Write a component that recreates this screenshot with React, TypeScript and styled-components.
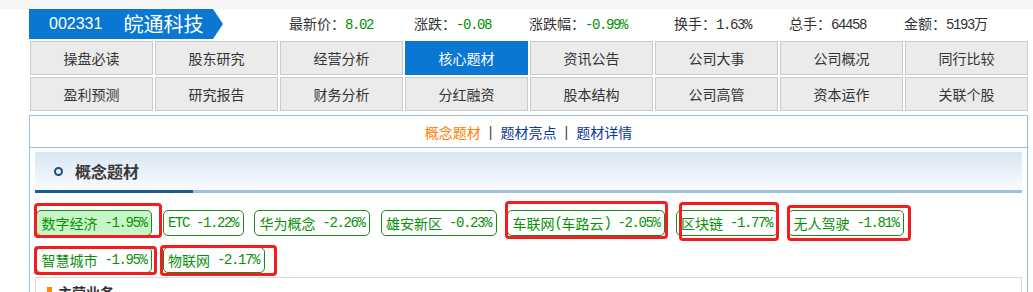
import React from 'react';
import styled, { createGlobalStyle } from 'styled-components';

const CJK = `"Noto Sans CJK SC", "Noto Sans", sans-serif`;
const MONO = `"Liberation Mono", "DejaVu Sans Mono", monospace`;

const GlobalStyle = createGlobalStyle`
  html, body {
    margin: 0;
    padding: 0;
    background: #fff;
  }
  body {
    font-family: ${CJK};
    color: #333;
  }
`;

interface Mark {
  t: number;
  r: number;
  b: number;
  l: number;
}

interface Concept {
  name: string;
  pct: string;
  selected?: boolean;
  mark?: Mark;
}

const stats = [
  { label: '最新价', value: '8.02', w: 125, down: true },
  { label: '涨跌', value: '-0.08', w: 115, down: true },
  { label: '涨跌幅', value: '-0.99%', w: 145, down: true },
  { label: '换手', value: '1.63%', w: 115 },
  { label: '总手', value: '64458', w: 115 },
  { label: '金额', value: '5193万', w: 0 },
];

const navRows = [
  ['操盘必读', '股东研究', '经营分析', '核心题材', '资讯公告', '公司大事', '公司概况', '同行比较'],
  ['盈利预测', '研究报告', '财务分析', '分红融资', '股本结构', '公司高管', '资本运作', '关联个股'],
];

const concepts: Concept[] = [
  { name: '数字经济', pct: '-1.95%', selected: true, mark: { t: -8, r: -11, b: -3, l: -3 } },
  { name: 'ETC', pct: '-1.22%' },
  { name: '华为概念', pct: '-2.26%' },
  { name: '雄安新区', pct: '-0.23%' },
  { name: '车联网(车路云)', pct: '-2.05%', mark: { t: -10, r: -4, b: -4, l: -3 } },
  { name: '区块链', pct: '-1.77%', mark: { t: -9, r: -2, b: -6, l: 2 } },
  { name: '无人驾驶', pct: '-1.81%', mark: { t: -6, r: -8, b: -6, l: -2 } },
  { name: '智慧城市', pct: '-1.95%', mark: { t: -2, r: -6, b: -3, l: -3 } },
  { name: '物联网', pct: '-2.17%', mark: { t: -3, r: -13, b: -4, l: -4 } },
];

// ascii runs get the narrow half-width look of the original page
function Mixed({ text }: { text: string }) {
  const parts = text.match(/[\x00-\x7f]+|[^\x00-\x7f]+/g) || [];
  return (
    <>
      {parts.map((p, i) =>
        /^[\x00-\x7f]/.test(p) ? <Half key={i}>{p}</Half> : <span key={i}>{p}</span>
      )}
    </>
  );
}

export default function App() {
  return (
    <>
      <GlobalStyle />
      <TopStrip />
      <Page>
        <Header>
          <CodeTag>
            <Code>002331</Code>
            <StockName>皖通科技</StockName>
          </CodeTag>
          <Stats>
            {stats.map((s) => (
              <Stat key={s.label} $w={s.w}>
                {s.label}：
                <StatValue $down={!!s.down}>
                  <Mixed text={s.value} />
                </StatValue>
              </Stat>
            ))}
          </Stats>
        </Header>

        <Nav>
          {navRows.flat().map((item) => (
            <NavCell key={item} $active={item === '核心题材'}>
              {item}
            </NavCell>
          ))}
        </Nav>

        <Panel>
          <SubTabs>
            <SubTab $active>概念题材</SubTab>
            <Sep>|</Sep>
            <SubTab>题材亮点</SubTab>
            <Sep>|</Sep>
            <SubTab>题材详情</SubTab>
          </SubTabs>

          <PanelBody>
            <SectionHead>
              <Ring />
              <SectionTitle>概念题材</SectionTitle>
            </SectionHead>

            <TagList>
              {concepts.map((c) => (
                <Tag key={c.name} $selected={!!c.selected} $mark={c.mark}>
                  <Mixed text={`${c.name} ${c.pct}`} />
                </Tag>
              ))}
            </TagList>

            <InfoBox>
              <Bullet />
              <InfoTitle>主营业务</InfoTitle>
            </InfoBox>
          </PanelBody>
        </Panel>
      </Page>
    </>
  );
}

const TopStrip = styled.div`
  height: 9px;
  background: #f6f6f6;
`;

const Page = styled.div`
  padding-left: 29px;
`;

const Half = styled.span`
  font-family: ${MONO};
  letter-spacing: -1.4px;
  white-space: pre;
`;

const Header = styled.div`
  display: flex;
  align-items: center;
  height: 30px;
`;

const CodeTag = styled.div`
  display: flex;
  align-items: center;
  box-sizing: border-box;
  width: 194px;
  height: 30px;
  padding-left: 20px;
  background: #0a78d2;
  color: #fff;
  clip-path: polygon(0 0, calc(100% - 10px) 0, 100% 50%, calc(100% - 10px) 100%, 0 100%);
`;

const Code = styled.span`
  font-family: "Liberation Sans", Arial, sans-serif;
  font-size: 16px;
  margin-right: 21px;
`;

const StockName = styled.span`
  font-family: ${CJK};
  font-size: 20px;
  line-height: 1;
`;

const Stats = styled.div`
  display: flex;
  margin-left: 66px;
  font-size: 14px;
  line-height: 20px;
  color: #333;
`;

const Stat = styled.div<{ $w: number }>`
  width: ${(p) => (p.$w ? `${p.$w}px` : 'auto')};
  white-space: nowrap;
`;

const StatValue = styled.span<{ $down: boolean }>`
  color: ${(p) => (p.$down ? '#009100' : '#333')};
`;

const Nav = styled.div`
  display: grid;
  grid-template-columns: repeat(8, 123px);
  grid-auto-rows: 34px;
  gap: 2px;
  margin: 2px 0 0 1px;
`;

const NavCell = styled.div<{ $active: boolean }>`
  display: flex;
  align-items: center;
  justify-content: center;
  box-sizing: border-box;
  border: 1px solid ${(p) => (p.$active ? '#0a78d2' : '#cacaca')};
  background: ${(p) => (p.$active ? '#0a78d2' : '#ebebeb')};
  color: ${(p) => (p.$active ? '#fff' : '#333')};
  font-size: 14px;
`;

const Panel = styled.div`
  box-sizing: border-box;
  width: 999px;
  height: 200px;
  margin-top: 4px;
  border: 1px solid #9fbdd3;
`;

const SubTabs = styled.div`
  display: flex;
  align-items: center;
  justify-content: center;
  height: 31px;
  border-bottom: 1px solid #9fbdd3;
  font-size: 14px;
`;

const SubTab = styled.span<{ $active?: boolean }>`
  color: ${(p) => (p.$active ? '#ff8000' : '#0c3a9a')};
`;

const Sep = styled.span`
  margin: 0 8px;
  color: #444;
  font-family: "Liberation Sans", Arial, sans-serif;
`;

const PanelBody = styled.div`
  padding: 4px 5px 0;
`;

const SectionHead = styled.div`
  display: flex;
  align-items: center;
  box-sizing: border-box;
  height: 41px;
  padding: 0 0 3px 19px;
  background:
    linear-gradient(to right, #1d5e90 0 158px, #9dc2df 158px) bottom / 100% 3px no-repeat,
    linear-gradient(#d9e6f3, #fbfdff);
`;

const Ring = styled.span`
  box-sizing: border-box;
  width: 9px;
  height: 9px;
  border: 2px solid #1b4f7e;
  border-radius: 50%;
  margin-right: 12px;
`;

const SectionTitle = styled.span`
  font-size: 16px;
  font-weight: bold;
  color: #3a3a3a;
`;

const TagList = styled.div`
  display: flex;
  flex-wrap: wrap;
  gap: 11px 10.5px;
  padding: 17px 0 0 1px;
`;

const Tag = styled.span<{ $selected: boolean; $mark?: Mark }>`
  position: relative;
  display: inline-flex;
  align-items: center;
  box-sizing: border-box;
  height: 26px;
  padding: 0 4.5px;
  border: 1px solid #1a8a1a;
  border-radius: 5px;
  background: ${(p) => (p.$selected ? '#c6f6c6' : '#fff')};
  color: #089008;
  font-size: 14px;
  white-space: nowrap;

  &::after {
    content: '';
    display: ${(p) => (p.$mark ? 'block' : 'none')};
    position: absolute;
    top: ${(p) => p.$mark?.t ?? 0}px;
    right: ${(p) => p.$mark?.r ?? 0}px;
    bottom: ${(p) => p.$mark?.b ?? 0}px;
    left: ${(p) => p.$mark?.l ?? 0}px;
    border: 3px solid #f41d1d;
    border-radius: 4px;
    pointer-events: none;
  }
`;

const InfoBox = styled.div`
  display: flex;
  align-items: flex-start;
  gap: 6px;
  box-sizing: border-box;
  height: 40px;
  margin-top: 4px;
  padding: 4px 11px 0;
  border: 1px solid #d9d9d9;
`;

const Bullet = styled.span`
  width: 5px;
  height: 7px;
  margin-top: 5px;
  background: #ff8a00;
`;

const InfoTitle = styled.span`
  font-size: 14px;
  font-weight: bold;
  color: #333;
  line-height: 20px;
`;
